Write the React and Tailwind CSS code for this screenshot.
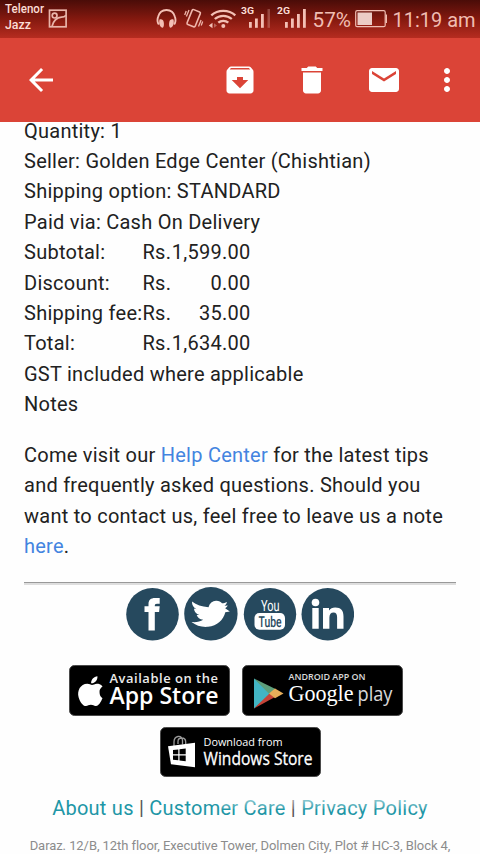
import React from "react";

function StatusBar() {
  return (
    <div className="h-[38px] w-full shrink-0 bg-gradient-to-b from-[#4a0c08] via-[#84190f] to-[#b62c20]">
      <svg width="480" height="38" viewBox="0 0 480 38" fill="none" fontFamily="Roboto, sans-serif">
        <g fill="#fbdcd5" fontSize="12.3" fontWeight="500">
          <text x="5" y="12.8" textLength="39" lengthAdjust="spacingAndGlyphs">Telenor</text>
          <text x="5" y="29" textLength="26" lengthAdjust="spacingAndGlyphs">Jazz</text>
        </g>
        <g stroke="#e9b5aa" strokeWidth="1.7">
          <rect x="49.5" y="10.2" width="16.6" height="16.6" />
          <circle cx="54.6" cy="15.6" r="2.4" />
          <path d="M52 26.500c1.500-6 5-9 9.500-9.300 2 0 3.500-.8 4.500-2" />
        </g>
        <path d="M158.800 24.500c-1.500-2-1.700-4.500-.8-7.500 1.200-4.500 4.500-7 8.500-7s7.300 2.500 8.500 7c.9 3 .7 5.500-.8 7.500" stroke="#f3c0b5" strokeWidth="1.900" />
        <path d="M159.500 19.500c2.500-.6 3.800.5 4.200 2.500.5 2.500.2 5-.8 5.700-3 0-4.400-4.500-3.400-8.200zM173.500 19.500c-2.500-.6-3.800.5-4.200 2.500-.5 2.500-.2 5 .8 5.700 3 0 4.400-4.500 3.400-8.200z" fill="#f3c0b5" />
        <g stroke="#efb6ab" strokeWidth="1.600">
          <rect x="189.300" y="10.200" width="8.800" height="16" rx="1.300" transform="rotate(22 193.700 18.200)" />
          <path d="M189 10l-2.600 6.500M186.200 11l-1.500 4M198.500 26.500l2.600-6.500M201.200 25.500l1.500-4" strokeWidth="1.300" />
        </g>
        <g stroke="#f3c0b5" strokeWidth="2.300">
          <path d="M211.300 15.300c6.500-6 17.500-6 24 0M214.800 19c4.800-4.300 12.200-4.300 17 0M218.300 22.700c2.800-2.500 7.200-2.500 10 0" />
        </g>
        <circle cx="223.300" cy="26" r="2" fill="#f3c0b5" />
        <path d="M208.800 25.500l3.700-2.700v5.400z" fill="#f3c0b5" />
        <path d="M217 25.500l-3-2.300v4.600z" fill="#b9655a" />
        <g fill="#fbdcd5" fontSize="9.500" fontWeight="700">
          <text x="241" y="14" textLength="13" lengthAdjust="spacingAndGlyphs">3G</text>
          <text x="277" y="14" textLength="13" lengthAdjust="spacingAndGlyphs">2G</text>
        </g>
        <g fill="#f3c0b5">
          <rect x="249" y="22" width="2.800" height="5.800" />
          <rect x="255" y="18.500" width="2.800" height="9.300" />
          <rect x="261" y="14" width="2.800" height="13.800" />
          <rect x="267.500" y="9" width="2.500" height="18.800" opacity=".3" />
          <rect x="285" y="22" width="2.800" height="5.800" />
          <rect x="291" y="18.500" width="2.800" height="9.300" />
          <rect x="297" y="14" width="2.800" height="13.800" />
          <rect x="303" y="9" width="2.800" height="18.800" />
        </g>
        <g fill="#f0bdb2" fontSize="20.500">
          <text x="312.500" y="27" textLength="38.500" lengthAdjust="spacingAndGlyphs">57%</text>
          <text x="392.500" y="27" textLength="83" lengthAdjust="spacingAndGlyphs">11:19 am</text>
        </g>
        <rect x="355.700" y="10.700" width="29.500" height="16" rx="1.500" stroke="#f0bdb2" strokeWidth="1.200" />
        <rect x="357.500" y="12.500" width="14.500" height="12.500" fill="#ecccc6" />
        <path d="M386.300 14.500v8.500" stroke="#f0bdb2" strokeWidth="1.400" />
      </svg>
    </div>
  );
}

function Icon({ d }) {
  return (
    <svg width="36" height="36" viewBox="0 0 24 24" fill="#fff" className="block shrink-0">
      <path d={d} />
    </svg>
  );
}

function AppBar() {
  return (
    <div className="flex h-[84px] shrink-0 items-center bg-[#db4437] pl-[23px] pr-[15px]">
      <Icon d="M20 11H7.830l5.590-5.590L12 4l-8 8 8 8 1.410-1.410L7.830 13H20v-2z" />
      <div className="ml-auto flex items-center gap-9">
        <Icon d="M20.540 5.230l-1.390-1.680C18.880 3.210 18.470 3 18 3H6c-.47 0-.88.210-1.160.550L3.460 5.230C3.170 5.570 3 6.020 3 6.500V19c0 1.100.9 2 2 2h14c1.100 0 2-.9 2-2V6.500c0-.48-.17-.93-.46-1.270zM12 17.500L6.500 12H10v-2h4v2h3.500L12 17.500zM5.120 5l.81-1h12l.94 1H5.120z" />
        <Icon d="M6 19c0 1.100.9 2 2 2h8c1.100 0 2-.9 2-2V7H6v12zM19 4h-3.500l-1-1h-5l-1 1H5v2h14V4z" />
        <Icon d="M20 4H4c-1.100 0-1.990.9-1.990 2L2 18c0 1.100.9 2 2 2h16c1.100 0 2-.9 2-2V6c0-1.100-.9-2-2-2zm0 4l-8 5-8-5V6l8 5 8-5v2z" />
        <div className="-ml-[9px]">
          <Icon d="M12 8c1.100 0 2-.9 2-2s-.9-2-2-2-2 .9-2 2 .9 2 2 2zm0 2c-1.100 0-2 .9-2 2s.9 2 2 2 2-.9 2-2-.9-2-2-2zm0 6c-1.100 0-2 .9-2 2s.9 2 2 2 2-.9 2-2-.9-2-2-2z" />
        </div>
      </div>
    </div>
  );
}

function PriceRow({ label, amount }) {
  return (
    <div className="flex">
      <span className="w-[118.500px] shrink-0 whitespace-nowrap">{label}</span>
      <span className="flex w-[108px] justify-between">
        <span>Rs.</span>
        <span>{amount}</span>
      </span>
    </div>
  );
}

function SocialIcons() {
  return (
    <svg width="228" height="54" viewBox="126 587.500 228 54" className="block" textRendering="geometricPrecision">
      <g fill="#26495e">
        <circle cx="152.500" cy="614.700" r="26.300" />
        <circle cx="210.900" cy="614.300" r="26.700" />
        <circle cx="270" cy="614.700" r="26.200" />
        <circle cx="327.800" cy="614.700" r="26.300" />
      </g>
      <path d="M148.500 631v-18.500h-4v-5.800h4v-2.200c0-4 2.200-6 6.500-6h4.700v5.700h-2.700c-1.700 0-2.200.7-2.200 2v.5h4.900l-.6 5.800h-4.300V631z" fill="#fff" />
      <path d="M192 602c4.500 3.500 9.500 5 16.500 5.700 1-4 4-6.200 7.500-6.500 3-.1 4.700 1 6 2.500 1.700 0 3.300-.6 5-1.300-.5 1.800-1.200 2.700-2.500 3.800l3.300-.2c-.6 1-1.500 2-2.600 2.800l4.600 3.200-4.500.8c-1.800 7.500-8 13.700-17.300 14.500-6.500.5-12-1.200-16.500-4.800 4.500.5 8.500-.2 11.700-2.300-3.500-.5-5.700-2-6.500-4.700h2.600c-3.300-1.300-5-3.300-5.400-6.500l2.500.7c-2.900-2-4.600-4.200-4.400-7.700z" fill="#fff" />
      <rect x="254.500" y="613.500" width="30.500" height="16.700" rx="4.800" fill="#fff" />
      <g fontFamily="Roboto, sans-serif">
        <text x="261" y="611.200" fontSize="15.500" textLength="18.500" lengthAdjust="spacingAndGlyphs" fill="#fff">You</text>
        <text x="258.500" y="627" fontSize="15" fontWeight="500" textLength="23" lengthAdjust="spacingAndGlyphs" fill="#26495e">Tube</text>
      </g>
      <g fill="#fff">
        <circle cx="315.500" cy="603" r="3.800" />
        <path d="M312.300 608.500h6.400v20.700h-6.400zM323 608.500h6v2.600c1.400-2.100 3.400-3.200 6.200-3.200 5.800 0 8.300 3 8.300 9v12.300h-6.400v-11.200c0-3.300-1-4.900-3.500-4.900-2.800 0-4.200 1.900-4.200 5v11.100H323z" />
      </g>
    </svg>
  );
}

function AppStoreBadge() {
  return (
    <svg width="161" height="51" viewBox="0 0 161 51" className="block">
      <rect x=".500" y=".500" width="160" height="50" rx="5" fill="#000" stroke="#4a4a4a" />
      <path transform="translate(-2.500 -3.700) scale(1.120)" d="M29.500 27.300c0-3.200 2.600-4.700 2.700-4.800-1.500-2.200-3.800-2.500-4.600-2.500-2-.2-3.800 1.100-4.800 1.100s-2.500-1.100-4.200-1.100c-6.300.2-9.300 6.200-7.800 12 1.300 4.500 4 8 6.600 7.900 1.700-.1 2.300-1.100 4.400-1.100s2.600 1.100 4.400 1c1.800 0 3-1.600 4.100-3.300 1.300-1.900 1.800-3.700 1.800-3.800-.1 0-2.600-1.300-2.600-5.400zM26.200 17.800c1-1.200 1.600-2.800 1.400-4.500-1.400.1-3.100 1-4.100 2.100-.9 1-1.700 2.700-1.500 4.300 1.600.1 3.200-.8 4.200-1.900z" fill="#fff" />
      <g fill="#fff" fontFamily="Open Sans, sans-serif">
        <text x="40.500" y="18" fontSize="11.800" fontWeight="600" letterSpacing=".5" textLength="109" lengthAdjust="spacingAndGlyphs" opacity=".92">Available on the</text>
        <text x="40.500" y="39.300" fontSize="23.500" fontWeight="600" textLength="109" lengthAdjust="spacingAndGlyphs">App Store</text>
      </g>
    </svg>
  );
}

function GooglePlayBadge() {
  return (
    <svg width="161" height="51" viewBox="0 0 161 51" className="block">
      <rect x=".500" y=".500" width="160" height="50" rx="5" fill="#000" stroke="#4a4a4a" />
      <path d="M12 13.500v30l17.500-14.700z" fill="#42b5c4" />
      <path d="M12 13.500l22 10.700-6.500 5z" fill="#5d9f7b" />
      <path d="M12 43.500l16-15.500 5 4z" fill="#c64438" />
      <path d="M33 23.500l8.500 5-8.500 4.700-6-4.700z" fill="#e6ad59" />
      <g fill="#fff">
        <text x="46.500" y="14.500" fontFamily="Open Sans, sans-serif" fontSize="9" fontWeight="600" textLength="77" lengthAdjust="spacingAndGlyphs" opacity=".85">ANDROID APP ON</text>
        <text x="46.500" y="36" fontFamily="Liberation Serif, serif" fontSize="24" textLength="65" lengthAdjust="spacingAndGlyphs">Google</text>
        <text x="115.500" y="36" fontFamily="Open Sans, sans-serif" fontSize="20.500" fontWeight="400" textLength="35" lengthAdjust="spacingAndGlyphs" opacity=".85">play</text>
      </g>
    </svg>
  );
}

function WindowsBadge() {
  return (
    <svg width="161" height="50" viewBox="0 0 161 50" className="block">
      <rect x=".500" y=".500" width="160" height="49" rx="5" fill="#000" stroke="#4a4a4a" />
      <path d="M14 19v-4c0-3 1.500-5 4-5.500 3-.5 4.500 1.500 4.500 4v4M18 17v-2.500c0-2 1.500-3.500 3.700-3.500 2.500 0 4 1.500 4 4V18" stroke="#999" strokeWidth="1.300" fill="none" />
      <path d="M8 19.300l27-3.500v24.500L11 37.300z" fill="#fff" />
      <path d="M13 23l5.300-.6v4.900H13zM19.500 22.300l6.200-.7v5.700h-6.200zM13 28.500h5.300v4.800l-5.300-.6zM19.500 28.500h6.200v5.800l-6.200-.8z" fill="#000" />
      <g fill="#fff" fontFamily="Open Sans, sans-serif">
        <text x="43.500" y="18.800" fontSize="11.500" textLength="79" lengthAdjust="spacingAndGlyphs">Download from</text>
        <text x="43.500" y="37.500" fontSize="18.500" textLength="109" lengthAdjust="spacingAndGlyphs" stroke="#fff" strokeWidth=".3">Windows Store</text>
      </g>
    </svg>
  );
}

export default function App() {
  return (
    <div className="flex h-[854px] w-[480px] flex-col overflow-hidden bg-[#fefefe] font-['Roboto',sans-serif] text-[#212121]">
      <StatusBar />
      <AppBar />
      <div className="min-h-0 flex-1 overflow-hidden">
        <div className="-mt-[6.500px] px-6 text-[20px] leading-[30.400px] tracking-[0.250px]">
          <p>Quantity: 1</p>
          <p>Seller: Golden Edge Center (Chishtian)</p>
          <p>Shipping option: STANDARD</p>
          <p>Paid via: Cash On Delivery</p>
          <PriceRow label="Subtotal:" amount="1,599.00" />
          <PriceRow label="Discount:" amount="0.00" />
          <PriceRow label="Shipping fee:" amount="35.00" />
          <PriceRow label="Total:" amount="1,634.00" />
          <p>GST included where applicable</p>
          <p>Notes</p>
          <p className="mt-[20.300px] whitespace-nowrap">
            Come visit our <a className="text-[#4384e0]">Help Center</a> for the latest tips<br />
            and frequently asked questions. Should you<br />
            want to contact us, feel free to leave us a note<br />
            <a className="text-[#4384e0]">here</a>.
          </p>
          <div className="mt-[20.400px] h-[3px] border-t border-[#999] bg-[#dedede]" />
        </div>
        <div className="mt-[2.500px] flex justify-center"><SocialIcons /></div>
        <div className="mt-[24px] flex justify-center gap-3 pr-[8px]">
          <AppStoreBadge />
          <GooglePlayBadge />
        </div>
        <div className="mt-[10.500px] flex justify-center"><WindowsBadge /></div>
        <div className="relative mt-[16.500px]">
          <p className="whitespace-nowrap text-center text-[20px] leading-[30px] tracking-[0.250px] text-[#555]">
            <a className="text-[#2196a6]">About us</a> | <a className="text-[#2196a6]">Customer Care</a> | <a className="text-[#2196a6]">Privacy Policy</a>
          </p>
          <div className="absolute left-[222px] top-[6px] h-[10px] w-[208px] bg-gradient-to-b from-white/50 to-white/10" />
        </div>
        <p className="mt-[13px] whitespace-nowrap text-center text-[13px] leading-[20px] tracking-[-0.065px] text-[#8c8c8c]">
          Daraz. 12/B, 12th floor, Executive Tower, Dolmen City, Plot # HC-3, Block 4,
        </p>
      </div>
    </div>
  );
}
